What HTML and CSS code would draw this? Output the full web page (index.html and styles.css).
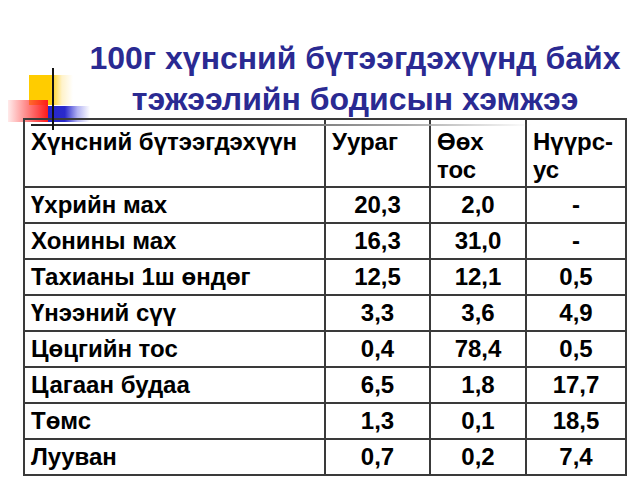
FILE: index.html
```html
<!DOCTYPE html>
<html lang="mn">
<head>
<meta charset="utf-8">
<title>100г хүнсний бүтээгдэхүүнд байх тэжээлийн бодисын хэмжээ</title>
<link rel="stylesheet" href="styles.css">
</head>
<body>
<div class="slide">
  <div class="deco deco-yellow"></div>
  <div class="deco deco-red"></div>
  <div class="deco deco-blue"></div>
  <div class="deco deco-vline"></div>

  <h1 class="title">100г хүнсний бүтээгдэхүүнд байх<br>тэжээлийн бодисын хэмжээ</h1>

  <div class="table-wrap">
    <table class="nutri">
      <colgroup>
        <col class="c-name">
        <col class="c-num1">
        <col class="c-num2">
        <col class="c-num3">
      </colgroup>
      <tr class="head">
        <td>Хүнсний бүтээгдэхүүн</td>
        <td>Уураг</td>
        <td>Өөх<br>тос</td>
        <td>Нүүрс-<br>ус</td>
      </tr>
      <tr><td>Үхрийн мах</td><td class="n">20,3</td><td class="n">2,0</td><td class="n">-</td></tr>
      <tr><td>Хонины мах</td><td class="n">16,3</td><td class="n">31,0</td><td class="n">-</td></tr>
      <tr><td>Тахианы 1ш өндөг</td><td class="n">12,5</td><td class="n">12,1</td><td class="n">0,5</td></tr>
      <tr><td>Үнээний сүү</td><td class="n">3,3</td><td class="n">3,6</td><td class="n">4,9</td></tr>
      <tr><td>Цөцгийн тос</td><td class="n">0,4</td><td class="n">78,4</td><td class="n">0,5</td></tr>
      <tr><td>Цагаан будаа</td><td class="n">6,5</td><td class="n">1,8</td><td class="n">17,7</td></tr>
      <tr><td>Төмс</td><td class="n">1,3</td><td class="n">0,1</td><td class="n">18,5</td></tr>
      <tr><td>Лууван</td><td class="n">0,7</td><td class="n">0,2</td><td class="n">7,4</td></tr>
    </table>
    <div class="deco deco-hline"></div>
  </div>
</div>
</body>
</html>
```
FILE: styles.css
```css
html, body {
  margin: 0;
  padding: 0;
  background: #ffffff;
}

.slide {
  position: relative;
  width: 638px;
  height: 478px;
  overflow: hidden;
  background: #ffffff;
  font-family: "Liberation Sans", Arial, sans-serif;
  padding-top: 38px;
  box-sizing: border-box;
}

.title {
  margin: 0 0 0 72px;
  width: 566px;
  font-size: 32px;
  line-height: 41px;
  font-weight: 700;
  text-align: center;
  color: #2a2a92;
  white-space: nowrap;
}

.table-wrap {
  position: relative;
  margin-top: -2px;
  margin-left: 23px;
  width: 602px;
}

.nutri {
  border-collapse: collapse;
  width: 602px;
  table-layout: fixed;
  font-family: "Liberation Sans", Arial, sans-serif;
  font-size: 24px;
  font-weight: 700;
  color: #000;
  border: 2px solid #1a1a1a;
}

.c-name { width: 301px; }
.c-num1 { width: 105px; }
.c-num2 { width: 96px; }
.c-num3 { width: 100px; }

.nutri td {
  border: 2px solid #3a3a3a;
  padding: 0 6px;
  height: 34px;
  line-height: 26px;
  font-weight: 700;
  vertical-align: middle;
  white-space: nowrap;
}

.nutri td.n {
  text-align: center;
  padding: 0;
}

.nutri tr.head td {
  height: 68px;
  line-height: 28px;
  vertical-align: top;
  padding-top: 8px;
  padding-left: 6px;
  box-sizing: border-box;
}

.deco {
  position: absolute;
}

.deco-yellow {
  left: 29px;
  top: 75px;
  width: 44px;
  height: 30px;
  background: linear-gradient(to right, #ffcc00 0%, #ffcc00 48%, rgba(255, 230, 150, 0.5) 75%, rgba(255, 255, 255, 0) 100%);
}

.deco-red {
  left: 8px;
  top: 100px;
  width: 40px;
  height: 22px;
  background: linear-gradient(to right, rgba(255, 120, 120, 0.15) 0%, rgba(255, 60, 60, 0.7) 55%, #ff1a1a 100%);
}

.deco-blue {
  left: 48px;
  top: 106px;
  width: 42px;
  height: 16px;
  background: linear-gradient(to right, #2626c8 0%, #2a2acc 40%, rgba(100, 100, 230, 0.5) 70%, rgba(255, 255, 255, 0) 100%);
}

.deco-vline {
  left: 52px;
  top: 68px;
  width: 2px;
  height: 62px;
  background: #111;
  z-index: 2;
}

.deco-hline {
  left: 8px;
  top: 6px;
  width: 500px;
  height: 2px;
  background: linear-gradient(to right, #222 0%, #555 40%, #aaa 75%, rgba(220, 220, 220, 0) 100%);
}
```
